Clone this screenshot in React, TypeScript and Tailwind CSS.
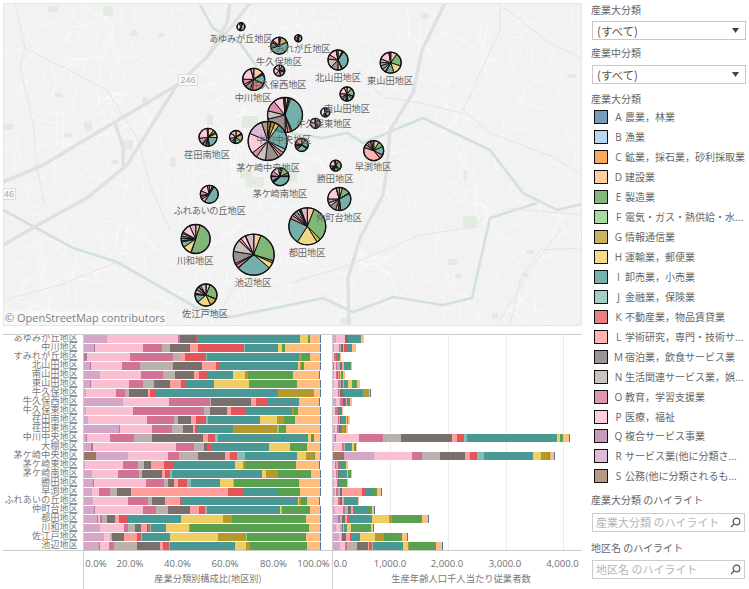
import React from "react";

type L = "A"|"B"|"C"|"D"|"E"|"F"|"G"|"H"|"I"|"J"|"K"|"L"|"M"|"N"|"O"|"P"|"Q"|"R"|"S";

const COL: Record<L, { bar: string; sw: string; hex: string }> = {
  A: { bar: "bg-[#4e79a7]", sw: "bg-[#7a9bbd]", hex: "#4e79a7" },
  B: { bar: "bg-[#a0cbe8]", sw: "bg-[#b8d8ee]", hex: "#a0cbe8" },
  C: { bar: "bg-[#f28e2b]", sw: "bg-[#f5aa60]", hex: "#f28e2b" },
  D: { bar: "bg-[#ffbe7d]", sw: "bg-[#ffce9e]", hex: "#ffbe7d" },
  E: { bar: "bg-[#59a14f]", sw: "bg-[#83b97b]", hex: "#59a14f" },
  F: { bar: "bg-[#8cd17d]", sw: "bg-[#a9dd9e]", hex: "#8cd17d" },
  G: { bar: "bg-[#b6992d]", sw: "bg-[#c8b362]", hex: "#b6992d" },
  H: { bar: "bg-[#f1ce63]", sw: "bg-[#f5da8a]", hex: "#f1ce63" },
  I: { bar: "bg-[#499894]", sw: "bg-[#77b2af]", hex: "#499894" },
  J: { bar: "bg-[#86bcb6]", sw: "bg-[#a4cdc8]", hex: "#86bcb6" },
  K: { bar: "bg-[#e15759]", sw: "bg-[#e98183]", hex: "#e15759" },
  L: { bar: "bg-[#ff9d9a]", sw: "bg-[#ffb6b3]", hex: "#ff9d9a" },
  M: { bar: "bg-[#79706e]", sw: "bg-[#9b9492]", hex: "#79706e" },
  N: { bar: "bg-[#bab0ac]", sw: "bg-[#cbc4c1]", hex: "#bab0ac" },
  O: { bar: "bg-[#d37295]", sw: "bg-[#de95b0]", hex: "#d37295" },
  P: { bar: "bg-[#fabfd2]", sw: "bg-[#fbcfdd]", hex: "#fabfd2" },
  Q: { bar: "bg-[#b07aa1]", sw: "bg-[#c49bb9]", hex: "#b07aa1" },
  R: { bar: "bg-[#d4a6c8]", sw: "bg-[#dfbcd6]", hex: "#d4a6c8" },
  S: { bar: "bg-[#9d7660]", sw: "bg-[#b69888]", hex: "#9d7660" },
};

// boundaries measured along the stacked bar (252 = 0%, 960 = 100%)
const parse = (s: string): [L, number][] => {
  let prev = 252;
  const out: [L, number][] = [];
  for (const t of s.split(" ")) {
    const l = t[0] as L;
    const end = Number(t.slice(1));
    out.push([l, end - prev]);
    prev = end;
  }
  out.push(["A", 1.5]);
  return out;
};

const ROWS: { name: string; total: number; segs: [L, number][] }[] = [
  ["あゆみが丘地区", 30.7, "R321 P534 O540 M588 K594 I900 H924 E930 D960"],
  ["中川地区", 22.7, "R282 Q285 P429 O486 N510 M570 L594 K732 J735 I834 H846 E855 D960"],
  ["すみれが丘地区", 7, "Q261 P390 O519 N540 L555 K618 J621 I897 G906 E930 D960"],
  ["北山田地区", 19, "R270 Q273 P366 O420 N519 M606 L648 K660 I894 H900 G903 E912 D960"],
  ["南山田地区", 11.7, "R300 P423 O489 N525 M582 L597 K621 I699 H735 G744 E879 D957"],
  ["東山田地区", 26.7, "R270 Q273 P387 O429 N462 M510 L543 K555 I642 H747 E891 D960"],
  ["牛久保地区", 37, "R258 P348 O375 N387 M444 L450 K465 I834 G942 D960"],
  ["牛久保西地区", 19, "R369 P507 O630 N633 M753 L768 K804 I897 D957"],
  ["牛久保東地区", 10, "R258 P399 O612 N630 M681 L693 K738 I876 G882 E894 D960"],
  ["荏田南地区", 17, "R264 P441 O522 N534 M573 L588 K618 J624 I780 H831 G852 E885 D960"],
  ["荏田東地区", 15, "R357 Q360 P456 O516 N549 M579 L585 K594 I699 G831 F837 E858 D960"],
  ["中川中央地区", 237, "R258 Q261 P330 O402 N456 M609 L624 K645 J654 I924 H933 E942 D960"],
  ["大棚地区", 24, "R273 Q279 P528 O582 N612 M621 K636 I807 H870 E921 D960"],
  ["茅ケ崎中央地区", 222, "S288 R384 P504 O537 N594 M675 L690 K711 J735 I891 H918 G942 E945 D960"],
  ["茅ケ崎東地区", 15, "R255 P369 O414 N432 M453 L492 K522 I705 H729 G735 E888 D957"],
  ["茅ケ崎南地区", 19, "R276 P354 O417 N426 M486 L495 K510 J516 I786 H798 G834 E933 D960"],
  ["勝田地区", 15, "R279 Q282 P438 O492 N504 M522 L534 K561 J573 I660 H699 F702 E897 D960"],
  ["早渕地区", 48, "R276 P297 O330 N351 M393 L684 K732 I834 E900 D960"],
  ["ふれあいの丘地区", 26, "R279 P384 O444 N456 M495 L540 K543 I894 H897 G903 E921 D957"],
  ["仲町台地区", 41, "R282 Q285 P429 O468 N504 M570 L597 K615 J621 I840 H843 F846 E930 D960"],
  ["都田地区", 95, "R292 Q294 P300 O306 N321 M345 L357 K381 I543 H669 G696 E918 D960"],
  ["川和地区", 40, "R300 P372 O384 N405 M423 L441 K450 J452 I498 H567 G570 E927 D960"],
  ["佐江戸地区", 74, "R312 P330 N336 M372 L411 K423 J426 I510 H654 G738 F741 E918 D960"],
  ["池辺地区", 109, "R297 Q300 P327 O342 N411 M480 L489 K507 J510 I705 H738 G750 E921 D960"],
].map(([name, total, s]) => ({ name: name as string, total: total as number, segs: parse(s as string) }));

const segsOf = (name: string) => ROWS.find((r) => r.name === name)!.segs;

const PIES: [string, number, number, number][] = [
  ["あゆみが丘地区", 241, 26.7, 4],
  ["すみれが丘地区", 298.3, 38.3, 3.5],
  ["牛久保地区", 279.3, 45.7, 8.5],
  ["牛久保西地区", 279.3, 70.7, 5.5],
  ["中川地区", 253.7, 79.3, 11],
  ["中川中央地区", 285, 115, 17.5],
  ["茅ケ崎中央地区", 267.7, 141, 19.5],
  ["荏田南地区", 208, 137.3, 9],
  ["荏田東地区", 236, 137, 6.5],
  ["北山田地区", 338, 60, 10],
  ["東山田地区", 390.7, 62.7, 10.5],
  ["南山田地区", 347, 94, 7],
  ["牛久保東地区", 315.3, 123.3, 5],
  ["大棚地区", 325.3, 112.3, 4.5],
  ["茅ケ崎東地区", 301.7, 145, 6.5],
  ["早渕地区", 373.7, 150.7, 10],
  ["勝田地区", 335.7, 165.7, 5.5],
  ["茅ケ崎南地区", 280, 176.7, 9],
  ["ふれあいの丘地区", 209.3, 194.3, 9],
  ["仲町台地区", 339.3, 199, 11.5],
  ["都田地区", 307.3, 226.3, 18.5],
  ["川和地区", 195.7, 239, 14.5],
  ["池辺地区", 253.7, 254.7, 20.5],
  ["佐江戸地区", 206, 295, 11],
];

const LABELS: [string, number, number][] = [
  ["あゆみが丘地区", 242, 39.5],
  ["すみれが丘地区", 300, 49.5],
  ["牛久保地区", 280, 62],
  ["牛久保西地区", 280, 85],
  ["中川地区", 254, 98.7],
  ["北山田地区", 339, 78],
  ["東山田地区", 391, 81],
  ["南山田地区", 348, 109],
  ["牛久保東地区", 325, 124.7],
  ["中川中央地区", 285, 140.7],
  ["荏田南地区", 208, 155],
  ["茅ケ崎中央地区", 269, 168],
  ["早渕地区", 374, 167.5],
  ["勝田地区", 336, 179.7],
  ["茅ケ崎南地区", 281, 194],
  ["ふれあいの丘地区", 211, 211.7],
  ["仲町台地区", 340, 218.3],
  ["都田地区", 308, 253.7],
  ["川和地区", 196, 261.7],
  ["池辺地区", 254, 283.7],
  ["佐江戸地区", 206, 314.7],
];

const LEGEND: [L, string][] = [
  ["A", "農業，林業"],
  ["B", "漁業"],
  ["C", "鉱業，採石業，砂利採取業"],
  ["D", "建設業"],
  ["E", "製造業"],
  ["F", "電気・ガス・熱供給・水..."],
  ["G", "情報通信業"],
  ["H", "運輸業，郵便業"],
  ["I", "卸売業，小売業"],
  ["J", "金融業，保険業"],
  ["K", "不動産業，物品賃貸業"],
  ["L", "学術研究，専門・技術サ..."],
  ["M", "宿泊業，飲食サービス業"],
  ["N", "生活関連サービス業，娯..."],
  ["O", "教育，学習支援業"],
  ["P", "医療，福祉"],
  ["Q", "複合サービス事業"],
  ["R", "サービス業(他に分類さ..."],
  ["S", "公務(他に分類されるも..."],
];

// Street texture for the base map
function streets(): string[] {
  let seed = 20240611;
  const rnd = () => {
    seed = (seed + 0x6d2b79f5) | 0;
    let t = Math.imul(seed ^ (seed >>> 15), 1 | seed);
    t = (t + Math.imul(t ^ (t >>> 7), 61 | t)) ^ t;
    return ((t ^ (t >>> 14)) >>> 0) / 4294967296;
  };
  const out: string[] = [];
  for (let i = 0; i < 520; i++) {
    let x = rnd() * 585;
    let y = rnd() * 326;
    let a = rnd() * Math.PI * 2;
    let d = `M${x.toFixed(1)} ${y.toFixed(1)}`;
    const n = 2 + Math.floor(rnd() * 4);
    for (let k = 0; k < n; k++) {
      a += (rnd() - 0.5) * 1.6;
      const len = 5 + rnd() * 14;
      x += Math.cos(a) * len;
      y += Math.sin(a) * len;
      d += `L${x.toFixed(1)} ${y.toFixed(1)}`;
    }
    out.push(d);
  }
  return out;
}
const STREETS = streets();

const GREY_WIDE = [
  "M3 182L43 165L177 85L207 57L250 3",
  "M230 3L227 23L207 57",
  "M3 245L43 222L87 198L127 165L177 85",
  "M115 123L123 147L123 170",
  "M445 3L422 50L413 93L390 130L387 167L383 195L360 238L348 278L349 325",
];
const GREY_THIN = [
  "M15 3L25 48L107 90L138 140L150 185L170 230",
  "M25 48L20 67L33 123L37 167L45 205",
  "M500 5L500 30L463 110L490 133L553 157L582 175",
  "M503 7L550 43L582 58",
  "M357 70L383 97L420 103L463 113",
  "M3 300L60 285L117 262",
  "M290 283L350 265L420 235L470 228L482 220",
  "M582 248L540 250L520 280L510 325",
  "M497 325L530 270L560 230",
  "M215 322L235 285L260 262",
  "M505 208L582 215",
];
const RIVERS = [
  "M200 5L213 28L240 43L257 67",
  "M290 133L323 138L347 133L363 143L423 118L490 150L503 167L523 193L557 210L582 204",
  "M537 203L490 218L472 298L443 305L393 297L353 312L323 298L290 305L230 317L197 308L117 262L73 248L40 230L3 210",
];
const PARKS: [number, number, number, number][] = [
  [53, 9, 5, 3], [108, 11, 5, 5], [134, 33, 3, 3], [161, 35, 3, 2], [59, 95, 4, 2], [88, 126, 4, 5], [68, 135, 4, 2],
  [8, 127, 5, 3], [210, 120, 3, 5], [250, 122, 8, 6], [128, 145, 5, 5], [145, 100, 3, 3], [115, 162, 4, 2], [173, 162, 3, 5],
  [255, 182, 9, 5], [246, 174, 6, 4], [425, 16, 4, 3], [470, 222, 7, 6], [452, 262, 5, 3], [458, 276, 3, 2], [495, 316, 3, 3],
  [530, 252, 4, 2], [525, 275, 3, 2], [290, 175, 7, 7], [465, 175, 2, 5], [572, 76, 4, 2], [345, 321, 4, 3],
];

function Pie({ name, cx, cy, r }: { name: string; cx: number; cy: number; r: number }) {
  const segs = [...segsOf(name)].reverse();
  const total = segs.reduce((s, x) => s + x[1], 0);
  let a = 0;
  return (
    <g>
      {segs.map(([l, v], i) => {
        const a0 = a;
        a += (v / total) * Math.PI * 2;
        const x0 = cx + r * Math.sin(a0);
        const y0 = cy - r * Math.cos(a0);
        const x1 = cx + r * Math.sin(a);
        const y1 = cy - r * Math.cos(a);
        const large = a - a0 > Math.PI ? 1 : 0;
        return (
          <path
            key={i}
            d={`M${cx} ${cy}L${x0} ${y0}A${r} ${r} 0 ${large} 1 ${x1} ${y1}Z`}
            fill={COL[l].hex}
            fillOpacity={0.75}
            stroke="#111"
            strokeWidth={0.9}
          />
        );
      })}
      <circle cx={cx} cy={cy} r={r} fill="none" stroke="#111" strokeWidth={1.3} />
    </g>
  );
}

function Shield({ x, y, w, text }: { x: number; y: number; w: number; text: string }) {
  return (
    <div
      className="absolute h-[12px] bg-[#f8f8f8] border border-[#dcdcdc] rounded-[1px] text-[9px] leading-[10px] text-[#aaaaaa] text-center font-['Liberation_Sans',sans-serif]"
      style={{ left: x, top: y, width: w }}
    >
      {text}
    </div>
  );
}

function Map() {
  return (
    <div className="relative h-[323px] w-[579px] overflow-hidden border border-[#e6e6e6] bg-[#f2f2f2]">
      <svg className="absolute left-[-4px] top-[-4px]" width={586} height={330} viewBox="0 0 586 330">
        {STREETS.map((d, i) => (
          <path key={i} d={d} fill="none" stroke="#ffffff" strokeWidth={0.6} strokeOpacity={0.8} />
        ))}
        {PARKS.map(([x, y, w, h], i) => (
          <rect key={i} x={x - w} y={y - h} width={w * 2} height={h * 2} rx={1.5} fill="#e2ebdf" />
        ))}
        {RIVERS.map((d, i) => (
          <path key={i} d={d} fill="none" stroke="#d2e0e0" strokeWidth={2.6} />
        ))}
        {GREY_THIN.map((d, i) => (
          <path key={i} d={d} fill="none" stroke="#e4e4e4" strokeWidth={1} />
        ))}
        {GREY_WIDE.map((d, i) => (
          <path key={i} d={d} fill="none" stroke="#e0e0e0" strokeWidth={3.4} strokeLinejoin="round" />
        ))}
        {PIES.map(([n, x, y, r]) => (
          <Pie key={n} name={n} cx={x} cy={y} r={r} />
        ))}
      </svg>
      <Shield x={174} y={70} w={20} text="246" />
      <Shield x={-2} y={184} w={14} text="46" />
      {LABELS.map(([t, x, y]) => (
        <span
          key={t}
          className="absolute -translate-x-1/2 -translate-y-1/2 whitespace-nowrap text-[9.2px] leading-[10px] text-[#666666] [font-feature-settings:'palt']"
          style={{ left: x - 5, top: y - 5.5 }}
        >
          {t}
        </span>
      ))}
      <div className="absolute bottom-0 left-0 h-[14px] bg-[#f8f8f8] px-[1px] text-[11px] leading-[14px] text-[#808080] font-['Open_Sans',sans-serif]">
        © OpenStreetMap contributors
      </div>
    </div>
  );
}

function Ticks({ items }: { items: [string, number][] }) {
  return (
    <div className="flex h-[13px] mt-[6px] font-['Open_Sans',sans-serif] text-[9.6px] leading-[13px] text-[#707070]">
      {items.map(([t, w]) => (
        <span key={t} className="flex shrink-0 justify-center whitespace-nowrap" style={{ width: w }}>
          {t}
        </span>
      ))}
    </div>
  );
}

function Charts() {
  return (
    <div className="mt-[8px] h-[255px] w-[579px] border-t border-[#cccccc]">
      <div className="flex h-[216px] border-b border-[#cccccc]">
        <div className="w-[80px] shrink-0 overflow-hidden pr-[5px]">
          <div className="-mt-[2px]">
            {ROWS.map((r) => (
              <div key={r.name} className="h-[9px] whitespace-nowrap text-right text-[9px] leading-[9px] tracking-[0.2px] text-[#7a7a7a]">
                {r.name}
              </div>
            ))}
          </div>
        </div>
        <div className="w-[249px] shrink-0 border-l border-[#cccccc]">
          {ROWS.map((r) => (
            <div key={r.name} className="flex h-[9px] pb-[1px]">
              {r.segs.map(([l, v], i) => (
                <div key={i} className={`h-full shrink-0 ${COL[l].bar}`} style={{ width: v / 3 }} />
              ))}
            </div>
          ))}
        </div>
        <div className="relative flex-1 border-l border-[#cccccc]">
          {[57, 115, 172.5, 230].map((x) => (
            <div key={x} className="absolute top-0 bottom-0 w-px bg-[#ececec]" style={{ left: x }} />
          ))}
          {ROWS.map((r) => {
            const all = r.segs.reduce((s, x) => s + x[1], 0);
            return (
              <div key={r.name} className="relative flex h-[9px] pb-[1px]">
                {r.segs.map(([l, v], i) => (
                  <div key={i} className={`h-full shrink-0 ${COL[l].bar}`} style={{ width: (v / all) * r.total }} />
                ))}
              </div>
            );
          })}
        </div>
      </div>
      <div className="flex h-[38px]">
        <div className="w-[80px] shrink-0" />
        <div className="w-[249px] shrink-0 border-l border-[#cccccc] text-center">
          <Ticks items={[["0.0%", 24], ["20.0%", 44], ["40.0%", 51], ["60.0%", 44], ["80.0%", 53], ["100.0%", 27]]} />
          <div className="mt-[2px] w-[248px] text-[9.2px] leading-[12px] text-[#777777]">産業分類別構成比(地区別)</div>
        </div>
        <div className="flex-1 border-l border-[#cccccc] text-center">
          <Ticks items={[["0.0", 15], ["1,000.0", 84], ["2,000.0", 30], ["3,000.0", 86], ["4,000.0", 29]]} />
          <div className="mt-[2px] w-[256px] text-[9.3px] leading-[12px] text-[#777777]">生産年齢人口千人当たり従業者数</div>
        </div>
      </div>
    </div>
  );
}

function Title({ children }: { children: React.ReactNode }) {
  return <div className="h-[14px] pl-[3px] text-[10px] leading-[14px] text-[#666666] whitespace-nowrap">{children}</div>;
}

function Select() {
  return (
    <div className="ml-[4px] flex h-[19px] w-[154px] items-center justify-between border border-[#c8c8c8] pl-[4px] pr-[6px] text-[11.5px] leading-[16px] text-[#555555]">
      <span>(すべて)</span>
      <svg width="7" height="5" viewBox="0 0 7 5">
        <path d="M0 0H7L3.5 5Z" fill="#444444" />
      </svg>
    </div>
  );
}

function SearchBox({ text }: { text: string }) {
  return (
    <div className="ml-[4px] flex h-[19px] w-[153px] items-center justify-between border border-[#cccccc] pl-[3px] pr-[3px] text-[11px] leading-[16px] text-[#b5b5b5]">
      <span className="whitespace-nowrap">{text}</span>
      <svg width="11" height="11" viewBox="0 0 11 11" fill="none" stroke="#555555" strokeWidth="1.2">
        <circle cx="6.5" cy="4.5" r="3.3" />
        <path d="M4 7L1 10" />
      </svg>
    </div>
  );
}

function Side() {
  return (
    <div className="w-[164px] shrink-0 pl-[3px] pt-[3px]">
      <Title>産業大分類</Title>
      <div className="mt-[4px]">
        <Select />
      </div>
      <div className="mt-[6px]">
        <Title>産業中分類</Title>
      </div>
      <div className="mt-[5px]">
        <Select />
      </div>
      <div className="mt-[8px]">
        <Title>産業大分類</Title>
      </div>
      <div className="mt-[1.5px] ml-[6px]">
        {LEGEND.map(([l, t]) => (
          <div key={l} className="flex h-[19.95px] items-center text-[10px] leading-[14px] text-[#666666] whitespace-nowrap">
            <span className={`h-[14px] w-[14px] shrink-0 border border-[#111111] ${COL[l].sw}`} />
            <span className="ml-[5px] w-[11px] shrink-0 text-center font-['Open_Sans',sans-serif]">{l}</span>
            <span className="ml-[1px]">{t}</span>
          </div>
        ))}
      </div>
      <div className="mt-[6.5px]">
        <Title>産業大分類 のハイライト</Title>
      </div>
      <div className="mt-[6px]">
        <SearchBox text="産業大分類 のハイライト" />
      </div>
      <div className="mt-[9px]">
        <Title>地区名 のハイライト</Title>
      </div>
      <div className="mt-[5px]">
        <SearchBox text="地区名 のハイライト" />
      </div>
    </div>
  );
}

export default function App() {
  return (
    <div className="flex h-[589px] w-[749px] overflow-hidden bg-white font-['Noto_Sans_CJK_JP','Liberation_Sans',sans-serif]">
      <div className="w-[585px] shrink-0 pl-[3px] pt-[3px]">
        <Map />
        <Charts />
      </div>
      <Side />
    </div>
  );
}
